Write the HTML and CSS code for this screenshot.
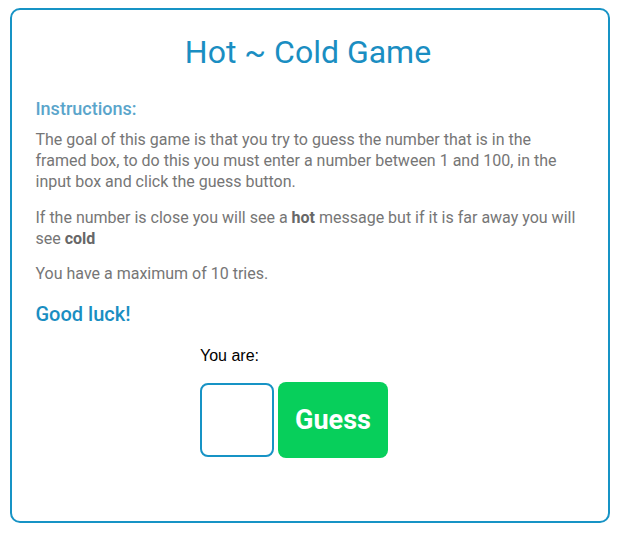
FILE: index.html
```html
<!DOCTYPE html>
<html>
<head>
<meta charset="utf-8">
<link rel="stylesheet" href="styles.css">
</head>
<body>
<div class="card">
  <h1 class="title">Hot ~ Cold Game</h1>
  <h3 class="subtitle">Instructions:</h3>
  <p class="text">The goal of this game is that you try to guess the number that is in the framed box, to do this you must enter a number between 1 and 100, in the input box and click the guess button.</p>
  <p class="text">If the number is close you will see a <b>hot</b> message but if it is far away you will see <b>cold</b></p>
  <p class="text">You have a maximum of 10 tries.</p>
  <h2 class="luck">Good luck!</h2>
  <div class="game">
    <div class="status">You are:</div>
    <div class="controls">
      <input class="guess-input" type="text">
      <button class="guess-btn">Guess</button>
    </div>
  </div>
</div>
</body>
</html>
```
FILE: styles.css
```css
body {
  margin: 8px;
  font-family: Roboto, sans-serif;
}
.card {
  box-sizing: border-box;
  width: 600px;
  height: 515px;
  margin: 0 auto;
  border: 2px solid #1793c5;
  border-radius: 10px;
  padding: 22px 27px 22px 24px;
}
.title {
  margin: 0;
  text-align: center;
  font-size: 32px;
  font-weight: 400;
  color: #1a8ec2;
  line-height: 40px;
}
.subtitle {
  margin: 25px 0 0;
  font-size: 18px;
  font-weight: 500;
  color: #5aa5cb;
  line-height: 24px;
}
.text {
  margin: 8px 0 0;
  font-size: 16px;
  line-height: 21px;
  color: #767676;
}
.text + .text {
  margin-top: 14.5px;
}
.text b {
  color: #676767;
  font-weight: 700;
}
.luck {
  margin: 16px 0 0;
  font-size: 20px;
  font-weight: 500;
  color: #1a8ec2;
  line-height: 28px;
}
.game {
  width: 216px;
  margin: 19px auto 0;
}
.status {
  font-family: "Liberation Sans", Arial, sans-serif;
  font-size: 16px;
  color: #000;
  line-height: 18px;
}
.controls {
  display: flex;
  align-items: center;
  gap: 4px;
  margin-top: 17px;
}
.guess-input {
  box-sizing: border-box;
  width: 74px;
  height: 74px;
  border: 2px solid #1793c5;
  border-radius: 8px;
  padding: 0;
  outline: none;
}
.guess-btn {
  box-sizing: border-box;
  width: 110px;
  height: 76px;
  border: none;
  border-radius: 8px;
  background: #07cf5b;
  color: #fff;
  font-family: Roboto, sans-serif;
  font-size: 27px;
  font-weight: 700;
  padding: 0;
}
```
